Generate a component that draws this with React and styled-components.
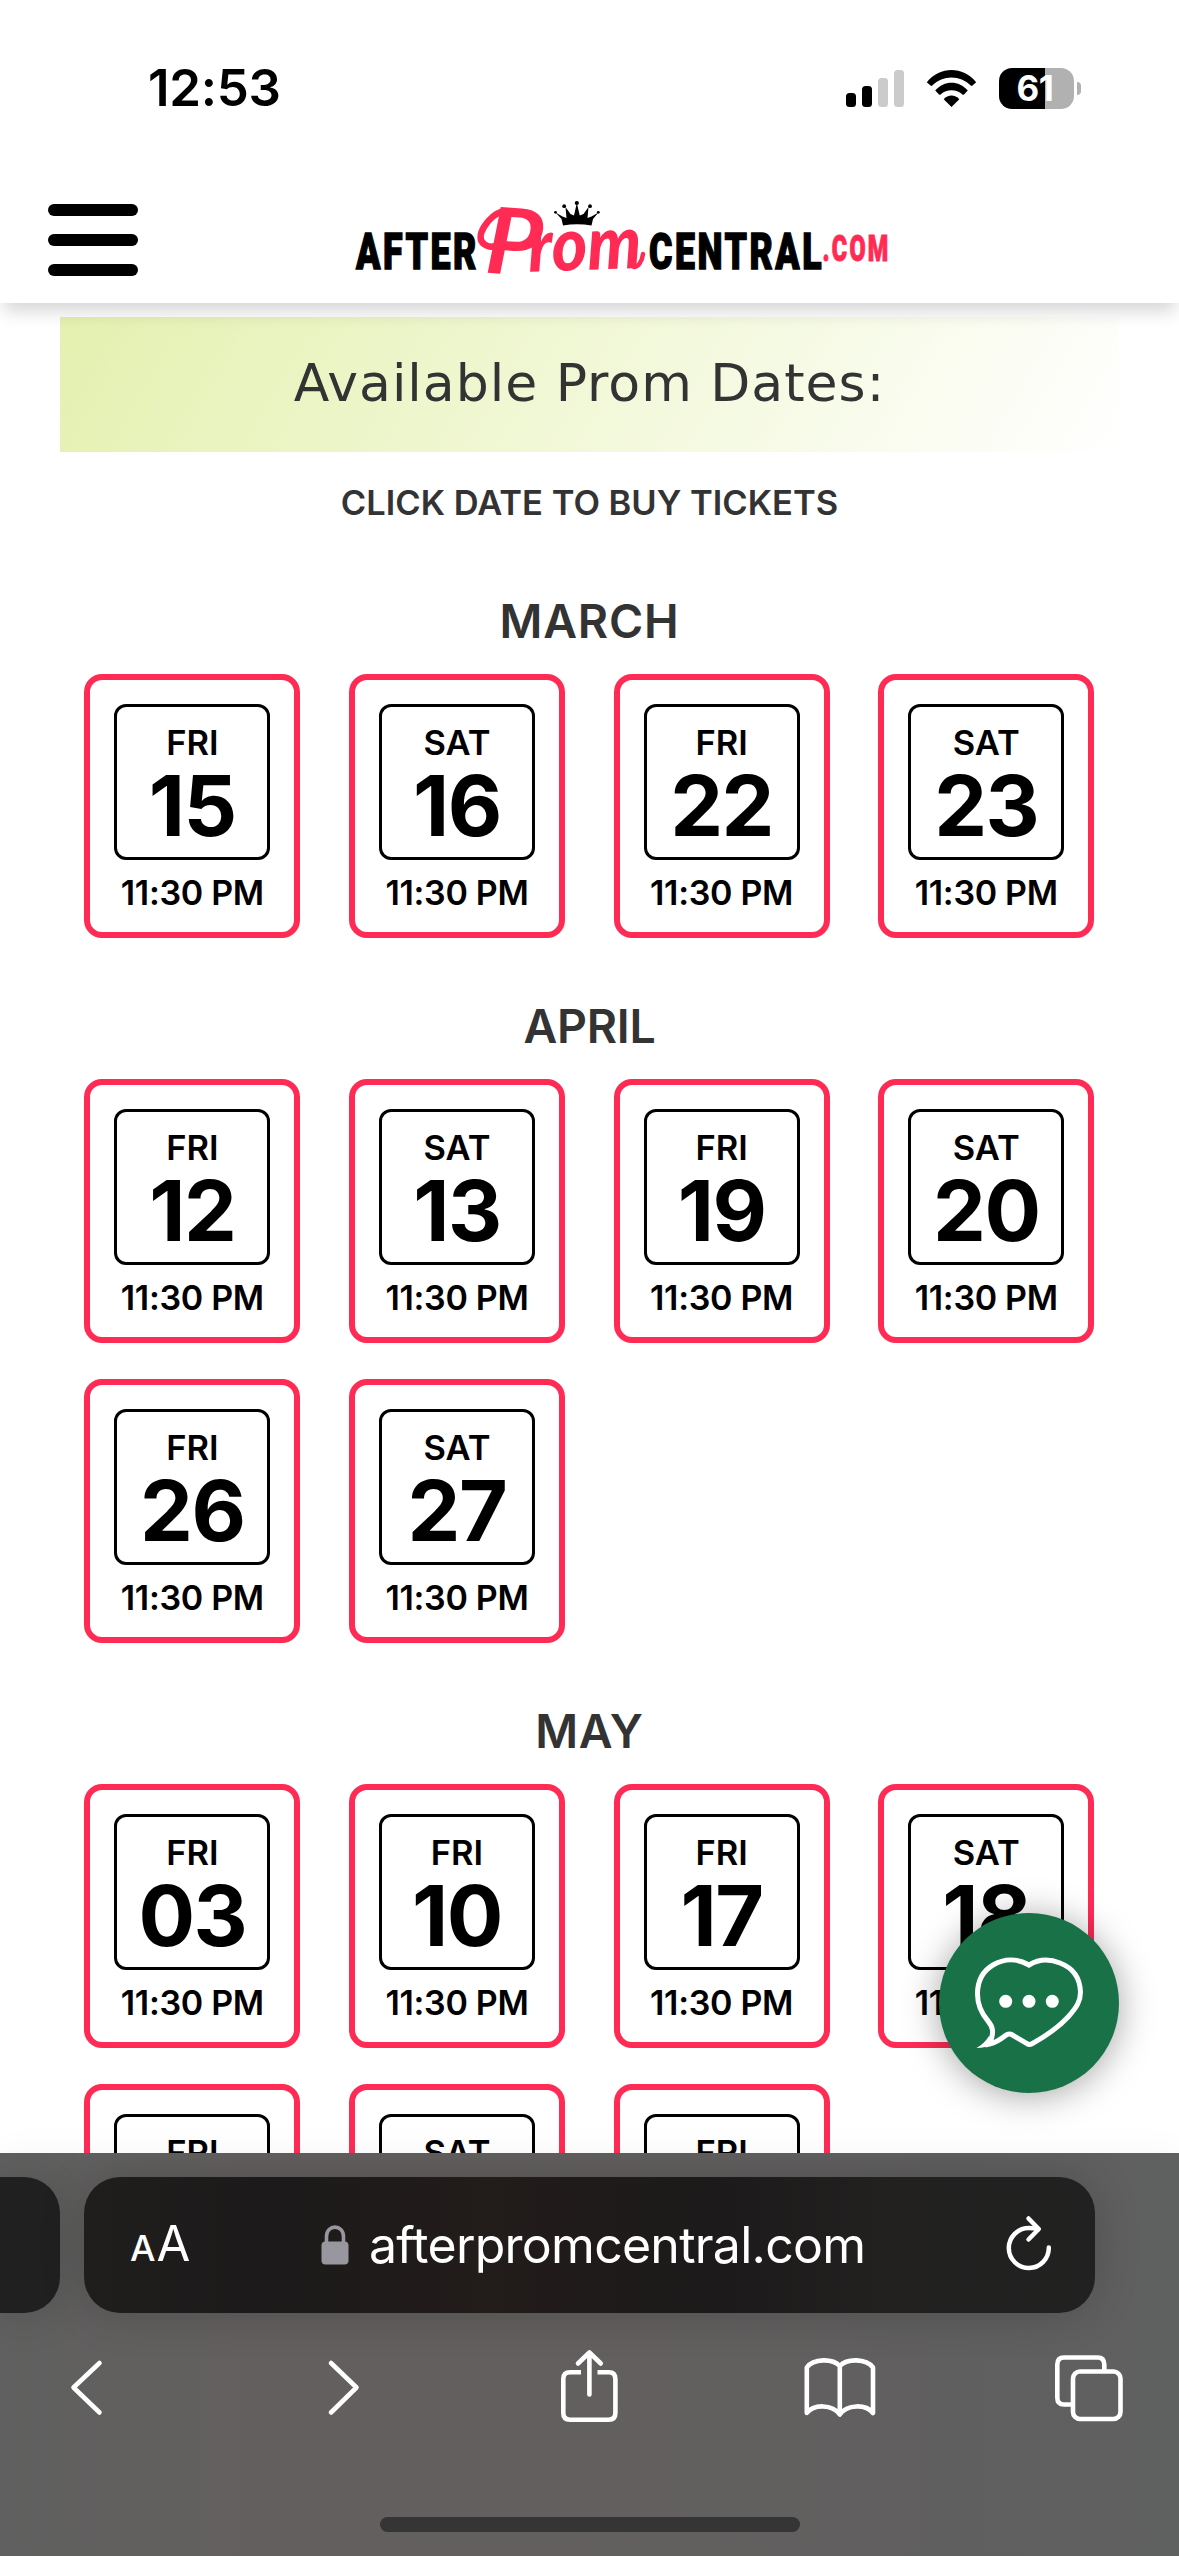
import React from "react";
import styled, { createGlobalStyle } from "styled-components";

const PINK = "#ff2b55";

const GlobalStyle = createGlobalStyle`
  *, *::before, *::after { box-sizing: border-box; }
  body { margin: 0; background: #fff; }
`;

const Phone = styled.div`
  position: relative;
  display: flex;
  flex-direction: column;
  width: 1179px;
  height: 2556px;
  overflow: hidden;
  background: #fff;
  font-family: Inter, "Liberation Sans", sans-serif;
`;

/* ---------- status bar and site header ---------- */

const TopArea = styled.div`
  position: relative;
  z-index: 2;
  flex: none;
  height: 303px;
  background: #fff;
  box-shadow: 0 12px 17px -4px rgba(0, 0, 0, 0.17);
`;

const StatusBar = styled.div`
  display: flex;
  align-items: center;
  justify-content: space-between;
  height: 176px;
  padding: 0 98px 0 148px;
`;

const Clock = styled.div`
  font-size: 51px;
  font-weight: 600;
  letter-spacing: -0.3px;
  line-height: 176px;
  color: #000;
`;

const StatusIcons = styled.div`
  display: flex;
  align-items: center;
`;

const Signal = styled.div`
  display: flex;
  align-items: flex-end;
  gap: 6px;
  height: 37px;
  margin-right: 22px;
`;

const SignalBar = styled.div`
  width: 10px;
  height: ${(p) => p.$height}px;
  border-radius: 3.5px;
  background: ${(p) => (p.$on ? "#000" : "#cbcbcb")};
`;

const WifiIcon = styled.svg`
  display: block;
  width: 51px;
  height: 37px;
  margin-right: 22px;
`;

const Battery = styled.div`
  display: flex;
  align-items: center;
  justify-content: center;
  width: 75px;
  height: 41px;
  border-radius: 13px;
  background: linear-gradient(to right, #000 46px, #b1b1b1 46px);
  color: #fff;
  font-size: 35px;
  font-weight: 700;
  letter-spacing: -0.5px;
  line-height: 41px;
  padding-right: 3px;
`;

const BatteryNub = styled.div`
  width: 4px;
  height: 13px;
  margin-left: 3px;
  border-radius: 0 6px 6px 0;
  background: #b1b1b1;
`;

const Header = styled.header`
  display: flex;
  align-items: center;
  height: 127px;
  padding-left: 48px;
`;

const MenuButton = styled.button`
  display: flex;
  flex-direction: column;
  justify-content: space-between;
  width: 90px;
  height: 72px;
  margin: 0 212px 0 0;
  padding: 0;
  border: 0;
  background: none;
`;

const MenuLine = styled.span`
  height: 12px;
  border-radius: 6px;
  background: #000;
`;

const LogoSvg = styled.svg`
  display: block;
  width: 550px;
  height: 110px;
`;

/* ---------- page content ---------- */

const Page = styled.main`
  flex: 1;
  min-height: 0;
  overflow: hidden;
  padding: 14px 60px 0;
`;

const Banner = styled.h1`
  height: 135px;
  margin: 0;
  background: linear-gradient(120deg, #e4f1b0 0%, #fff 100%);
  color: #333;
  font-family: "DejaVu Sans", Inter, sans-serif;
  font-size: 52px;
  font-weight: 400;
  letter-spacing: 1px;
  line-height: 132px;
  text-align: center;
`;

const Hint = styled.p`
  height: 101px;
  margin: 0 0 16px;
  color: #333;
  font-size: 34.5px;
  font-weight: 600;
  line-height: 101px;
  text-align: center;
`;

const Month = styled.section`
  margin-bottom: 36px;
`;

const MonthName = styled.h2`
  margin: 0;
  color: #333;
  font-size: 46.5px;
  font-weight: 600;
  letter-spacing: ${(p) => p.$tracking}px;
  line-height: 105px;
  text-align: center;
`;

const DateGrid = styled.div`
  display: grid;
  width: 1058.6px;
  grid-template-columns: repeat(4, 1fr);
  row-gap: 36px;
  justify-items: center;
`;

const DateCard = styled.div`
  display: flex;
  flex-direction: column;
  align-items: center;
  width: 216px;
  height: 264px;
  padding-top: 24px;
  border: 6px solid ${PINK};
  border-radius: 18px;
  color: #000;
  font-weight: 600;
`;

const DateBox = styled.div`
  width: 156px;
  height: 156px;
  padding-top: 16px;
  border: 3px solid #000;
  border-radius: 12px;
  text-align: center;
`;

const Weekday = styled.div`
  font-size: 34.5px;
  line-height: 40px;
`;

const Day = styled.div`
  font-size: 84px;
  font-weight: 650;
  letter-spacing: -1.5px;
  line-height: 86px;
`;

const Time = styled.div`
  font-size: 34px;
  letter-spacing: -0.3px;
  line-height: 65px;
  white-space: nowrap;
`;

const ChatButton = styled.button`
  position: absolute;
  z-index: 3;
  left: 939px;
  top: 1913px;
  width: 180px;
  height: 180px;
  padding: 0;
  border: 0;
  border-radius: 50%;
  background: #187147;
  box-shadow: 0 3px 36px rgba(0, 0, 0, 0.36);
`;

const ChatIcon = styled.svg`
  display: block;
  width: 180px;
  height: 180px;
`;

/* ---------- browser controls ---------- */

const BrowserBar = styled.footer`
  position: relative;
  z-index: 4;
  display: flex;
  flex: none;
  flex-direction: column;
  height: 403px;
  padding-top: 24px;
  overflow: hidden;
  background: linear-gradient(to right, #5f605f 0%, #635f5f 22%, #625f5f 60%, #605f5f 80%, #5f6060 100%);
  box-shadow: 0 0 36px rgba(0, 0, 0, 0.04);
`;

const AddressRow = styled.div`
  display: flex;
  gap: 24px;
  height: 136px;
`;

const PreviousTab = styled.div`
  width: 60px;
  border-radius: 0 36px 36px 0;
  background: #212020;
  box-shadow: 0 0 45px rgba(0, 0, 0, 0.16);
`;

const AddressBar = styled.div`
  display: flex;
  align-items: center;
  width: 1011px;
  padding: 0 41px 0 46px;
  border-radius: 36px;
  background: linear-gradient(to right, #201d1d 0%, #1c1a1a 18%, #221c1b 40%, #1c1a1a 62%, #222120 80%, #212121 100%);
  box-shadow: 0 0 45px rgba(0, 0, 0, 0.18);
  color: #fff;
`;

const TextSize = styled.div`
  display: flex;
  align-items: baseline;
  gap: 1px;
  width: 191px;
  padding-top: 2px;
`;

const Letter = styled.span`
  font-size: ${(p) => p.$size}px;
  font-weight: ${(p) => p.$weight};
  line-height: 60px;
`;

const LockIcon = styled.svg`
  display: block;
  width: 28px;
  height: 40px;
`;

const Url = styled.div`
  flex: 1;
  padding-left: 20px;
  font-size: 50px;
  letter-spacing: -0.75px;
  line-height: 136px;
  white-space: nowrap;
`;

const ReloadIcon = styled.svg`
  display: block;
  width: 50px;
  height: 60px;
`;

const Toolbar = styled.nav`
  display: flex;
  align-items: center;
  justify-content: space-between;
  height: 150px;
  padding: 0 52px 0 49px;
`;

const ToolIcon = styled.svg`
  display: block;
  width: 76px;
  height: 80px;
  fill: none;
  stroke: #fff;
  stroke-width: 4.6;
  stroke-linecap: round;
  stroke-linejoin: round;
`;

const HomeIndicator = styled.div`
  width: 420px;
  height: 15px;
  margin: 54px auto 0;
  border-radius: 8px;
  background: #353535;
`;

const months = [
  { name: "MARCH", tracking: 0.8, dates: [["FRI", "15"], ["SAT", "16"], ["FRI", "22"], ["SAT", "23"]] },
  { name: "APRIL", tracking: -0.3, dates: [["FRI", "12"], ["SAT", "13"], ["FRI", "19"], ["SAT", "20"], ["FRI", "26"], ["SAT", "27"]] },
  { name: "MAY", tracking: 0.8, dates: [["FRI", "03"], ["FRI", "10"], ["FRI", "17"], ["SAT", "18"], ["FRI", "24"], ["SAT", "25"], ["FRI", "31"]] },
];

function Logo() {
  return (
    <LogoSvg viewBox="350 185 550 110" role="img" aria-label="AfterPromCentral.com">
      <g fontFamily="Roboto, 'Liberation Sans', sans-serif" fontWeight="900">
        <g stroke="#000" strokeWidth="1.4">
          <text x="356" y="269" fontSize="50" letterSpacing="3.500" textLength="123" lengthAdjust="spacingAndGlyphs">AFTER</text>
          <text x="649" y="269" fontSize="50" letterSpacing="3.500" textLength="175" lengthAdjust="spacingAndGlyphs">CENTRAL</text>
        </g>
        <g fill={PINK} fontFamily="Lato, sans-serif" fontStyle="italic">
          <text transform="rotate(4 505 274)" x="484" y="274" fontSize="92" fontWeight="700" textLength="56" lengthAdjust="spacingAndGlyphs">P</text>
          <text transform="rotate(-2 580 270)" x="529" y="270" fontSize="74" textLength="113" lengthAdjust="spacingAndGlyphs">rom</text>
          <path d="M503 211C488 216 474 237 484 244C489 248 494 247 498 245" fill="none" stroke={PINK} strokeWidth="6.5" strokeLinecap="round" />
          <path d="M634 267C638 267 642 262 643 254" fill="none" stroke={PINK} strokeWidth="4.5" strokeLinecap="round" />
        </g>
        <text x="822.500" y="260.500" fontSize="36" letterSpacing="3.500" fill={PINK} stroke={PINK} strokeWidth="1" textLength="68" lengthAdjust="spacingAndGlyphs">.COM</text>
      </g>
      <path d="M563 225.500L561.500 219L555.500 212.500L562.500 216.500L566.500 218L565.500 207L570.500 214L574 215.500L576.800 203L579.800 215.500L583.500 214L588.500 207L587.500 218L591.500 216.500L598.500 212.500L593 219L591.500 225.500Q577 223 563 225.500Z" />
      <circle cx="555.500" cy="212.300" r="1.400" />
      <circle cx="564.200" cy="206.200" r="1.900" />
      <circle cx="576.800" cy="203" r="2.100" />
      <circle cx="590" cy="206.200" r="1.900" />
      <circle cx="598.300" cy="212.300" r="1.400" />
    </LogoSvg>
  );
}

function DateTile({ weekday, day }) {
  return (
    <DateCard>
      <DateBox>
        <Weekday>{weekday}</Weekday>
        <Day>{day}</Day>
      </DateBox>
      <Time>11:30 PM</Time>
    </DateCard>
  );
}

export default function App() {
  return (
    <Phone>
      <GlobalStyle />
      <TopArea>
        <StatusBar>
          <Clock>12:53</Clock>
          <StatusIcons>
            <Signal>
              <SignalBar $height={14} $on />
              <SignalBar $height={21} $on />
              <SignalBar $height={29} />
              <SignalBar $height={37} />
            </Signal>
            <WifiIcon viewBox="0 0 51 37">
              <path d="M0.8 12.2C14.2-4 36.8-4 50.2 12.2L46.5 15.6Q45.6 16.3 44.8 15.5C34 4.8 17 4.8 6.2 15.5Q5.4 16.3 4.5 15.6Z" />
              <path d="M9.2 20.6C18.2 10.2 32.8 10.2 41.8 20.6L38 24.4Q37.2 25.1 36.4 24.4C30.2 18.8 20.8 18.8 14.6 24.4Q13.8 25.1 13 24.4Z" />
              <path d="M17.7 29.2C22 24.2 29 24.2 33.3 29.2L25.5 37Z" />
            </WifiIcon>
            <Battery>61</Battery>
            <BatteryNub />
          </StatusIcons>
        </StatusBar>
        <Header>
          <MenuButton aria-label="Menu">
            <MenuLine />
            <MenuLine />
            <MenuLine />
          </MenuButton>
          <Logo />
        </Header>
      </TopArea>

      <Page>
        <Banner>Available Prom Dates:</Banner>
        <Hint>CLICK DATE TO BUY TICKETS</Hint>
        {months.map((month) => (
          <Month key={month.name}>
            <MonthName $tracking={month.tracking}>{month.name}</MonthName>
            <DateGrid>
              {month.dates.map(([weekday, day]) => (
                <DateTile key={day} weekday={weekday} day={day} />
              ))}
            </DateGrid>
          </Month>
        ))}
      </Page>

      <ChatButton aria-label="Chat">
        <ChatIcon viewBox="0 0 180 180">
          <path
            d="M90 52C78 45 65 45.500 54 52C42 59 38.500 70 38.500 81C38.500 92 43 101 49 108C54 114 55.500 119 50.500 131C57 129.500 61.500 126.500 66.500 122.500C69 120.500 71 120.500 73.500 122L88 130.700Q90.300 132.200 93 130.700C106 123.500 119 115 129 104C138 94 141.500 88 141.500 79C141 65 134 55 121 50C110 45.500 99 46.500 90 52Z"
            fill="none" stroke="#fff" strokeWidth="5" strokeLinejoin="miter" />
          <path d="M37.500 135C43 132 47 128 50 123L54 131C49 133.500 43.500 135 37.500 135Z" fill="#fff" />
          <circle cx="66.700" cy="88.300" r="6.500" fill="#fff" />
          <circle cx="90" cy="88.300" r="6.500" fill="#fff" />
          <circle cx="113.300" cy="88.300" r="6.500" fill="#fff" />
        </ChatIcon>
      </ChatButton>

      <BrowserBar>
        <AddressRow>
          <PreviousTab />
          <AddressBar>
            <TextSize>
              <Letter $size={36} $weight={500}>A</Letter>
              <Letter $size={49} $weight={400}>A</Letter>
            </TextSize>
            <LockIcon viewBox="0 0 28 40">
              <path d="M5.500 18V11.500C5.500-1 22.500-1 22.500 11.500V18" fill="none" stroke="#98979f" strokeWidth="3.600" />
              <rect x="0.500" y="16.500" width="27" height="23" rx="4" fill="#98979f" />
            </LockIcon>
            <Url>afterpromcentral.com</Url>
            <ReloadIcon viewBox="1004 2215 50 60" fill="none" stroke="#fff" strokeWidth="4.500" strokeLinecap="round" strokeLinejoin="round">
              <path d="M1048.800 2247.500A20 20 0 1 1 1029 2228Q1034 2228 1038 2229.300" />
              <path d="M1028.500 2218.500L1038.800 2229L1028.500 2239.500" />
            </ReloadIcon>
          </AddressBar>
        </AddressRow>
        <Toolbar>
          <ToolIcon viewBox="49 2348 76 80">
            <path d="M99.500 2363L73.500 2387.500L99.500 2412.500" />
          </ToolIcon>
          <ToolIcon viewBox="299.500 2348 76 80">
            <path d="M330.500 2363L356 2387.500L330.500 2412.500" />
          </ToolIcon>
          <ToolIcon viewBox="550 2348 76 80">
            <path strokeLinecap="butt" d="M581 2372.300H570Q563.300 2372.300 563.300 2379V2413Q563.300 2419.700 570 2419.700H608.700Q615.400 2419.700 615.400 2413V2379Q615.400 2372.300 608.700 2372.300H597.500" />
            <path d="M589.400 2353V2394.500M578 2363.500L589.400 2352.500L600.800 2363.500" />
          </ToolIcon>
          <ToolIcon viewBox="800.500 2348 76 80">
            <path d="M839.300 2366C832 2358.300 813 2358.300 806.300 2367.500V2413C813 2404 832 2404 839.300 2414.500C846.500 2404 865.500 2404 872.500 2413V2367.500C865.500 2358.300 846.500 2358.300 839.300 2366V2413" />
          </ToolIcon>
          <ToolIcon viewBox="1051 2348 76 80">
            <path strokeLinecap="butt" d="M1071 2404.500H1064Q1057.300 2404.500 1057.300 2397.500V2364.500Q1057.300 2357.500 1064 2357.500H1097.500Q1104.300 2357.500 1104.300 2364.500V2370" />
            <rect x="1073" y="2371.500" width="47.500" height="47.500" rx="7" />
          </ToolIcon>
        </Toolbar>
        <HomeIndicator />
      </BrowserBar>
    </Phone>
  );
}
